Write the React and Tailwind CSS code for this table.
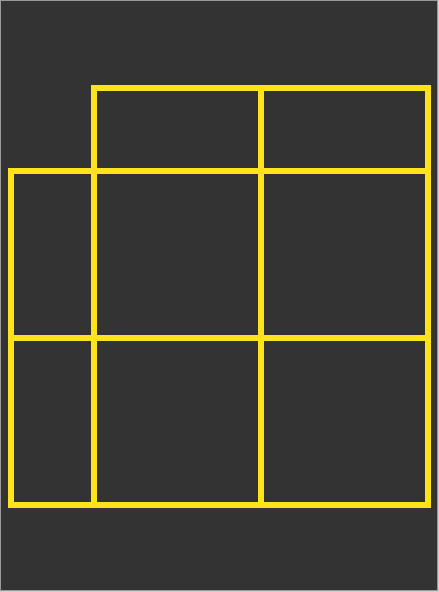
export default function App() {
  const cell = "border-r-[6px] border-b-[6px] border-[#ffe31a]";
  return (
    <div className="w-[439px] h-[592px] bg-[#cfcfcf]">
      <div className="w-[438px] h-[591px] border border-[#9a9a9a] bg-[#333333] pl-[7px] pt-[84px]">
        <div className="flex ml-[83px]">
          <div className="w-[173px] h-[89px] border-[6px] border-[#ffe31a]" />
          <div className="w-[173px] h-[89px] border-[6px] border-[#ffe31a] -ml-[6px]" />
        </div>
        <div className="-mt-[6px] w-[423px] grid grid-cols-[83px_167px_167px] grid-rows-[167px_167px] border-t-[6px] border-l-[6px] border-[#ffe31a]">
          <div className={cell} />
          <div className={cell} />
          <div className={cell} />
          <div className={cell} />
          <div className={cell} />
          <div className={cell} />
        </div>
      </div>
    </div>
  );
}
